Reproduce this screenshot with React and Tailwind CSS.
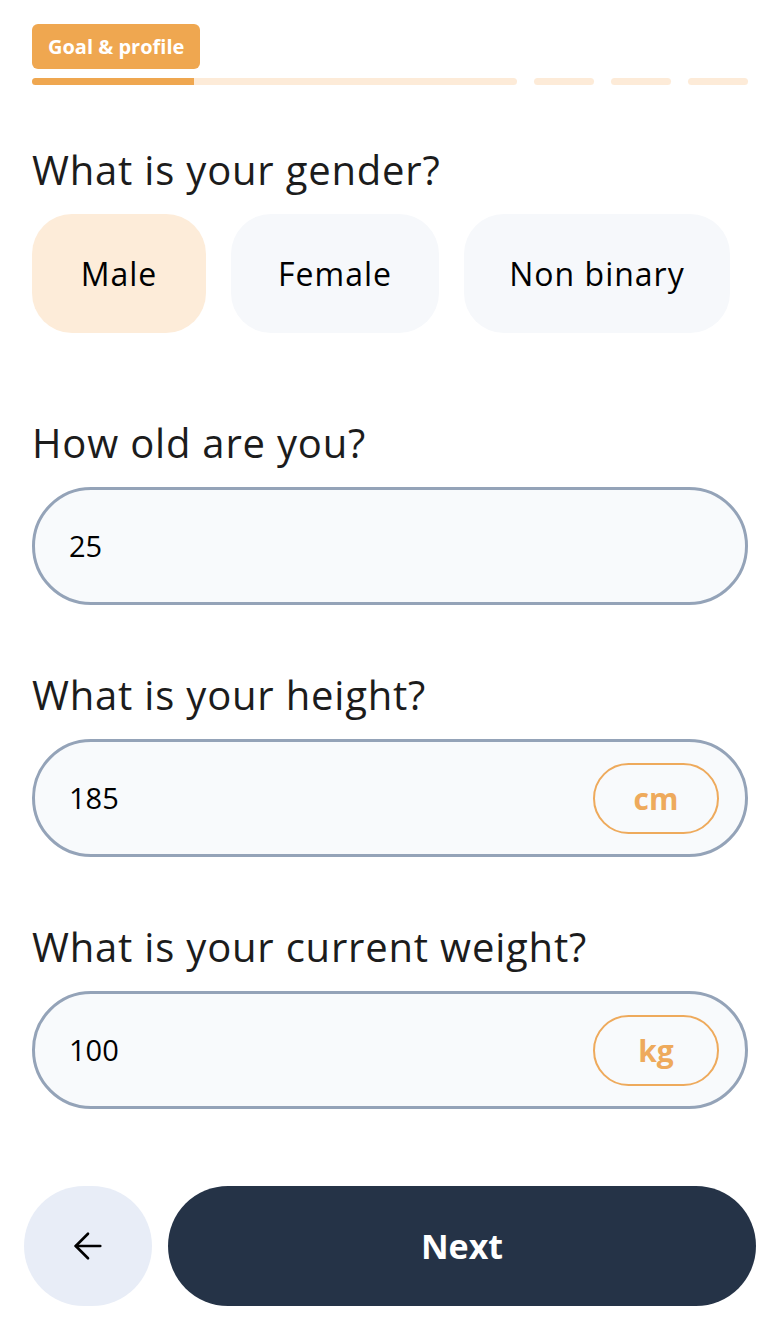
import { ArrowLeft } from "lucide-react";

const font = { fontFamily: "'Open Sans', 'Noto Sans', sans-serif" };

function Heading({ children, className = "" }) {
  return (
    <h2
      className={`text-[40px] leading-[43px] font-medium tracking-[0.8px] text-[#1c1c1c] ${className}`}
    >
      {children}
    </h2>
  );
}

function Field({ value, unit, className = "" }) {
  return (
    <div
      className={`h-[118px] rounded-full border-[3px] border-[#94a3b8] bg-[#f8fafc] flex items-center justify-between pl-[34px] pr-[26px] ${className}`}
    >
      <span className="text-[29px] font-medium text-black">{value}</span>
      {unit && (
        <span className="w-[126px] h-[71px] rounded-full border-2 border-[#eeaa5c] flex items-center justify-center text-[30px] font-bold text-[#eeaa5c]">
          {unit}
        </span>
      )}
    </div>
  );
}

export default function App() {
  const genders = [
    { label: "Male", w: "w-[174px]", active: true },
    { label: "Female", w: "w-[208px]" },
    { label: "Non binary", w: "w-[266px]" },
  ];

  return (
    <div className="w-[780px] h-[1326px] bg-white relative" style={font}>
      <div className="px-8 pt-6">
        {/* badge */}
        <div className="inline-flex items-center h-[45px] px-4 rounded-md bg-[#efa750] text-white text-[20px] font-bold">
          Goal &amp; profile
        </div>

        {/* progress */}
        <div className="flex gap-[17px] mt-[9px]">
          <div className="w-[486px] h-[7px] rounded-full bg-[#fdebd8] overflow-hidden">
            <div className="w-[162px] h-full bg-[#efa750]" />
          </div>
          <div className="w-[60px] h-[7px] rounded-full bg-[#fdebd8]" />
          <div className="w-[60px] h-[7px] rounded-full bg-[#fdebd8]" />
          <div className="w-[60px] h-[7px] rounded-full bg-[#fdebd8]" />
        </div>

        <Heading className="mt-[63px]">What is your gender?</Heading>
        <div className="flex gap-[25px] mt-[23px]">
          {genders.map((g) => (
            <button
              key={g.label}
              className={`${g.w} h-[119px] rounded-[40px] text-[32px] tracking-[1px] font-medium text-black ${
                g.active ? "bg-[#fdecd9]" : "bg-[#f6f8fb]"
              }`}
            >
              {g.label}
            </button>
          ))}
        </div>

        <Heading className="mt-[88px]">How old are you?</Heading>
        <Field value="25" className="mt-[23px] w-[716px]" />

        <Heading className="mt-[68px]">What is your height?</Heading>
        <Field value="185" unit="cm" className="mt-[23px] w-[716px]" />

        <Heading className="mt-[68px]">What is your current weight?</Heading>
        <Field value="100" unit="kg" className="mt-[23px] w-[716px]" />
      </div>

      {/* footer */}
      <div className="flex gap-4 px-6 mt-[77px]">
        <button className="w-[128px] h-[120px] rounded-full bg-[#e8edf7] flex items-center justify-center text-black">
          <ArrowLeft size={42} strokeWidth={1.5} />
        </button>
        <button className="flex-1 h-[120px] rounded-full bg-[#253347] text-white text-[34px] font-bold">
          Next
        </button>
      </div>
    </div>
  );
}
